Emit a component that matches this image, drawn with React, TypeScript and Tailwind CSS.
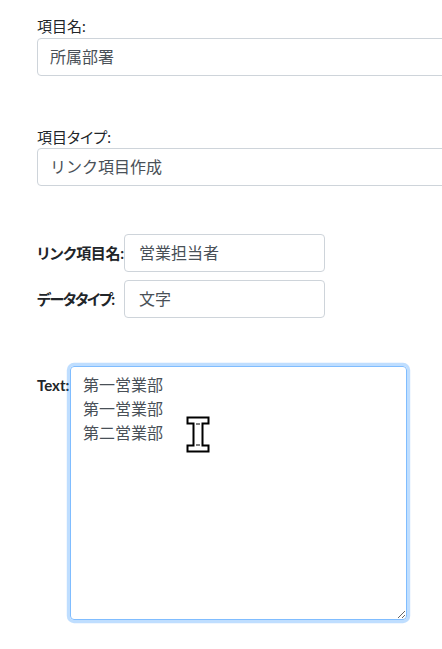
import React from "react";

const font = "font-['Lato','Noto_Sans_CJK_JP',sans-serif]";

export default function App() {
  return (
    <div className={`relative w-[442px] h-[649px] overflow-hidden bg-white ${font}`}>
      <div className="pl-[37px] pt-[15px]">
        <label className="block text-[15px] leading-[22px] text-[#212529] [font-feature-settings:'palt']">項目名:</label>
        <div className="mt-[1px] w-[440px] h-[38px] border border-[#ced4da] rounded-[4px] px-[12px] flex items-center text-[16px] text-[#495057]">
          所属部署
        </div>

        <label className="block mt-[50px] text-[15px] leading-[22px] text-[#212529] [font-feature-settings:'palt']">項目タイプ:</label>
        <div className="mt-[0px] w-[440px] h-[38px] border border-[#ced4da] rounded-[4px] px-[12px] flex items-center text-[16px] text-[#495057]">
          リンク項目作成
        </div>

        <div className="mt-[48px] flex flex-col gap-[8px]">
          <div className="flex items-center">
            <label className="w-[87px] text-[15px] font-bold text-[#212529] [font-feature-settings:'palt'] tracking-[-0.3px] whitespace-nowrap">リンク項目名:</label>
            <div className="w-[201px] h-[38px] border border-[#ced4da] rounded-[4px] px-[14px] flex items-center text-[16px] text-[#495057]">
              営業担当者
            </div>
          </div>
          <div className="flex items-center">
            <label className="w-[87px] text-[15px] font-bold text-[#212529] [font-feature-settings:'palt'] tracking-[-1.5px] whitespace-nowrap">データタイプ:</label>
            <div className="w-[201px] h-[38px] border border-[#ced4da] rounded-[4px] px-[14px] flex items-center text-[16px] text-[#495057]">
              文字
            </div>
          </div>
        </div>

        <div className="mt-[48px] flex items-start">
          <label className="w-[33px] mt-[8px] text-[15px] leading-[22px] font-bold text-[#212529]">Text:</label>
          <textarea
            readOnly
            className={`w-[337px] h-[254px] border border-[#80bdff] rounded-[4px] px-[12px] py-[6px] text-[16px] leading-[24px] text-[#495057] outline-none shadow-[0_0_0_3.2px_rgba(0,123,255,0.25)] ${font}`}
            defaultValue={"第一営業部\n第一営業部\n第二営業部"}
          />
        </div>
      </div>

      <svg className="absolute left-[185px] top-[415px]" width="26" height="40" viewBox="185 415 26 40">
        <path
          d="M187.5 417.5 H208.5 V423.5 H202.5 V445.5 H208.5 V451.5 H187.5 V445.5 H193.5 V423.5 H187.5 Z"
          fill="white"
          stroke="black"
          strokeWidth="2"
        />
        <path d="M196 424 H200 M196 445 H200" stroke="black" strokeWidth="1" />
      </svg>
    </div>
  );
}
